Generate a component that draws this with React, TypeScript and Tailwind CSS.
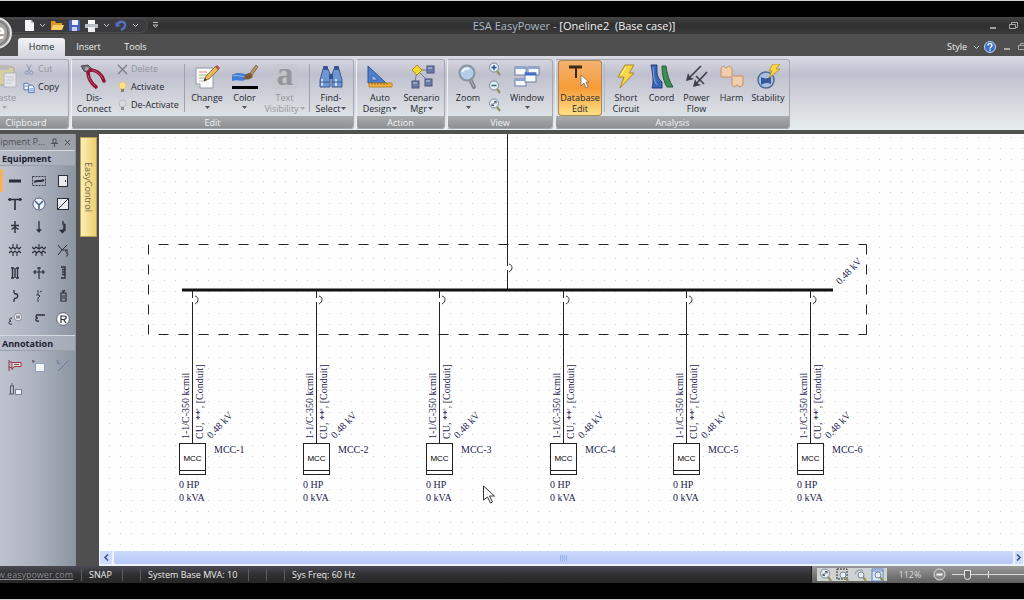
import { useState, type ReactNode } from "react"
import clsx from "clsx"

/* ---------- ribbon icons ---------- */

const PasteIcon = () => (
  <svg width="26" height="26" viewBox="0 0 26 26">
    <rect x="2" y="3" width="20" height="18" rx="2" fill="#d8cf9f" stroke="#a9a48e" />
    <rect x="7" y="1" width="10" height="5" rx="1" fill="#b9b9b9" />
    <path d="M12 9h12v14H12z" fill="#e3e5ea" stroke="#b3b6bd" />
    <path d="M14 13h8M14 16h8M14 19h6" stroke="#c3c6cd" />
  </svg>
)

const PliersIcon = () => (
  <svg width="28" height="26" viewBox="0 0 28 26">
    <path d="M1 2l7-1 4 4-3 4-5-2z" fill="#6f7276" stroke="#4a4c50" />
    <circle cx="7" cy="5" r="2" fill="#a9acb1" />
    <path d="M8 8c0 6 3 11 8 15" fill="none" stroke="#8e1633" strokeWidth="3.6" strokeLinecap="round" />
    <path d="M10 6c7 0 12 5 14 11" fill="none" stroke="#8e1633" strokeWidth="3.6" strokeLinecap="round" />
    <path d="M12 6c5 1 9 5 11 9M8 11c1 4 3 8 7 11" fill="none" stroke="#c0536c" />
  </svg>
)

const ChangeIcon = () => (
  <svg width="28" height="26" viewBox="0 0 28 26">
    <path d="M3 4h17v20H7l-4-4z" fill="#fbfbfc" stroke="#9298a3" />
    <path d="M3 20h4v4" fill="#d7dae0" stroke="#9298a3" />
    <path d="M6 8h8" stroke="#e08a7a" />
    <path d="M6 11h10M6 14h7" stroke="#8bb86a" />
    <path d="M6 17h6" stroke="#bcc1c9" />
    <path d="M11 17l2-5L23 2l3 3-10 10z" fill="#e6b85c" stroke="#7d5a22" strokeWidth="0.8" />
    <path d="M22 3l2-2 3 3-2 2z" fill="#b5544a" />
    <path d="M11 17l1-3 2 2z" fill="#333" />
  </svg>
)

const ColorIcon = () => (
  <svg width="28" height="26" viewBox="0 0 28 26">
    <path d="M1 11c5-3 10-2 16 0l-3 5c-4 2-8-1-13 1z" fill="#3f7fd6" />
    <path d="M2 12c4-1 8 0 12 1" stroke="#8fb8ee" fill="none" />
    <path d="M13 15c0-4 3-6 6-6l3 3c-1 3-5 4-9 3z" fill="#7b5a34" />
    <path d="M19 9l6-8 2 2-6 8z" fill="#b99766" stroke="#6d5232" strokeWidth="0.7" />
    <rect x="1" y="22" width="26" height="3" fill="#000" />
  </svg>
)

const TextIcon = () => (
  <svg width="26" height="26" viewBox="0 0 26 26" className="overflow-visible">
    <rect x="1" y="0" width="24" height="25" fill="#c3c5cb" opacity="0.6" />
    <text x="13" y="21" textAnchor="middle" fontSize="34" fontWeight="700" fontFamily="Liberation Serif, serif" fill="#94969b">
      a
    </text>
  </svg>
)

const BinocularsIcon = () => (
  <svg width="26" height="26" viewBox="0 0 26 26">
    <path d="M5 5h5l2 5v13H2v-7z" fill="#6f95d0" stroke="#3c5b92" />
    <path d="M21 5h-5l-2 5v13h10v-7z" fill="#6f95d0" stroke="#3c5b92" />
    <path d="M11 10h4v5h-4z" fill="#34558f" />
    <rect x="5" y="2" width="5" height="4" rx="1" fill="#34558f" />
    <rect x="16" y="2" width="5" height="4" rx="1" fill="#34558f" />
    <path d="M4 15v7M18 15v7" stroke="#c9dcf7" strokeWidth="2" />
    <path d="M2 18h10M14 18h10" stroke="#34558f" />
  </svg>
)

const DesignIcon = () => (
  <svg width="28" height="26" viewBox="0 0 28 26">
    <path d="M2 2v17h18z" fill="#4c7fd0" stroke="#2c559c" />
    <path d="M6 11v5h6z" fill="#a9c2ec" stroke="#2c559c" strokeWidth="0.7" />
    <path d="M3 19h23v4H3z" fill="#f0b33c" stroke="#b27716" strokeWidth="0.8" />
    <path d="M6 19v2M9 19v2M12 19v2M15 19v2M18 19v2M21 19v2" stroke="#8a5b10" strokeWidth="0.8" />
  </svg>
)

const ScenarioIcon = () => (
  <svg width="28" height="26" viewBox="0 0 28 26">
    <path d="M10 6h9M9 7L7 18M11 8l9 9" stroke="#777" fill="none" />
    <path d="M9 1l5 5-5 5-5-5z" fill="#f5d832" stroke="#a88f14" />
    <rect x="19" y="2" width="7" height="7" fill="#6b7aa6" stroke="#4a5680" />
    <rect x="4" y="17" width="7" height="7" fill="#6b7aa6" stroke="#4a5680" />
    <rect x="17" y="15" width="7" height="7" fill="#6b7aa6" stroke="#4a5680" />
    <path d="M20 4h4M5 19h4M18 17h4" stroke="#c5cee8" />
  </svg>
)

const ZoomIcon = () => (
  <svg width="24" height="26" viewBox="0 0 24 26">
    <path d="M14 15l4 8" stroke="#7d828c" strokeWidth="4" strokeLinecap="round" />
    <path d="M14 15l4 8" stroke="#b5bac4" strokeWidth="1" />
    <circle cx="11" cy="9" r="7.5" fill="#b4cdea" stroke="#8b93a1" strokeWidth="2" />
    <path d="M6 8c1-3 4-4 7-3" stroke="#eef5fd" strokeWidth="2" fill="none" />
  </svg>
)

const WindowIcon = () => (
  <svg width="28" height="26" viewBox="0 0 28 26">
    <g fill="#f7f9fd" stroke="#6b7fa8">
      <rect x="2" y="3" width="11" height="8" />
      <rect x="15" y="3" width="11" height="8" />
      <rect x="2" y="15" width="11" height="7" />
      <rect x="12" y="9" width="11" height="9" />
    </g>
    <path d="M2 4h11M15 4h11M2 16h10" stroke="#8ea6d2" strokeWidth="2" />
    <path d="M12 10h11" stroke="#3e6fc4" strokeWidth="3" />
  </svg>
)

const DatabaseEditIcon = () => (
  <svg width="28" height="26" viewBox="0 0 28 26">
    <path d="M3 3h13" stroke="#3a2a10" strokeWidth="3" />
    <path d="M10 4v10" stroke="#3a2a10" strokeWidth="2" />
    <path d="M15 11v11l3-3 2 5 2-1-2-5h3z" fill="#fff" stroke="#7a6a55" strokeWidth="0.8" />
  </svg>
)

const BoltIcon = () => (
  <svg width="26" height="26" viewBox="0 0 26 26">
    <path d="M12 1h9l-5 8h5L7 24l4-11H5z" fill="#f9d648" stroke="#a98a22" />
    <path d="M13 3l-5 8" stroke="#fff3b8" />
  </svg>
)

const CoordIcon = () => (
  <svg width="28" height="26" viewBox="0 0 28 26">
    <path d="M3 1h6c0 7-1 12 5 17v6H4c2-6 1-13-1-23z" fill="#3a66b8" stroke="#223f7c" />
    <path d="M5 3c1 7 0 13 4 18" stroke="#88a8e0" fill="none" />
    <path d="M14 2h4c1 8 3 15 7 21h-6c-3-5-5-12-5-21z" fill="#3f8d55" stroke="#235c34" />
  </svg>
)

const PowerFlowIcon = () => (
  <svg width="28" height="26" viewBox="0 0 28 26">
    <g fill="none" stroke="#3c3f46" strokeWidth="1.6">
      <path d="M18 2L5 15" />
      <path d="M24 8L12 21" />
      <path d="M13 12l8 8" />
    </g>
    <path d="M3 17l2-8 2 4 4 2zM10 23l2-8 2 4 4 2z" fill="#3c3f46" />
  </svg>
)

const HarmIcon = () => (
  <svg width="28" height="26" viewBox="0 0 28 26">
    <path d="M3 13V4l2-2 3 2 3-2 3 2v8h11v9l-3 2-3-2-3 2-2-2v-8z" fill="#f1cdae" stroke="#c98f66" />
  </svg>
)

const StabilityIcon = () => (
  <svg width="28" height="26" viewBox="0 0 28 26">
    <circle cx="12" cy="16" r="8" fill="#a9bfe2" stroke="#51688f" strokeWidth="1.5" />
    <path d="M7 13c3 2 7 2 10-1v8c-3-2-7-1-10 1z" fill="#34589c" />
    <path d="M19 0h7l-4 5h4L15 14l3-7h-3z" fill="#f9d648" stroke="#a98a22" strokeWidth="0.8" />
  </svg>
)

/* ---------- small icons ---------- */

const CutIcon = () => (
  <svg width="13" height="13" viewBox="0 0 13 13" fill="none" stroke="#8492b8">
    <path d="M4 1l4 8M9 1L5 9" />
    <circle cx="4" cy="10" r="1.8" />
    <circle cx="9" cy="10" r="1.8" />
  </svg>
)

const CopyIcon = () => (
  <svg width="13" height="13" viewBox="0 0 13 13" fill="#f4f7fc" stroke="#4d6fae">
    <path d="M1 2h4l2 2v5H1z" />
    <path d="M6 4h4l2 2v6H6z" />
    <path d="M7 8h4M7 10h4M2 5h3" stroke="#4f86cf" />
  </svg>
)

const DeleteIcon = () => (
  <svg width="11" height="11" viewBox="0 0 11 11" stroke="#7d7f88" strokeWidth="1.4">
    <path d="M1 1l9 9M10 1l-9 9" />
  </svg>
)

const BulbIcon = ({ on }: { on: boolean }) => (
  <svg width="11" height="13" viewBox="0 0 11 13">
    <circle cx="5.5" cy="4.5" r="3.5" fill={on ? "#fbe38b" : "#d8dade"} stroke={on ? "#e2c565" : "#b2b5bb"} strokeWidth="0.8" />
    <path d="M4 8h3v3H4z" fill={on ? "#8b8462" : "#8d9096"} />
  </svg>
)

const MagnifierIcon = ({ kind }: { kind: "in" | "out" | "fit" | "area" | "prev" | "page" }) => {
  const large = kind === "in" || kind === "out" || kind === "fit"
  return (
    <svg width="14" height="14" viewBox="0 0 14 14" fill="none">
      {kind === "area" && <rect x="1" y="1" width="10" height="10" stroke="#222" strokeDasharray="2 1" />}
      {kind === "page" && <path d="M1 1h11v12H1zM1 3h11" fill="#dbe7f8" stroke="#5d82bf" />}
      {kind === "prev" && <path d="M1 6c1-4 5-5 8-3" stroke="#9ab" strokeWidth="1.4" />}
      <path d="M9 9l3 4" stroke="#94905a" strokeWidth="2.2" />
      <circle
        cx={large ? 6 : 7}
        cy={large ? 5.5 : 7}
        r={large ? 4.5 : 3}
        fill="#e4eef8"
        stroke="#7a8797"
      />
      {kind === "in" && <path d="M3.5 5.5h5M6 3v5" stroke="#274b8a" strokeWidth="1.4" />}
      {kind === "out" && <path d="M3.5 5.5h5" stroke="#2b6b78" strokeWidth="1.4" />}
      {kind === "fit" && <path d="M4 7.5l4-4M4 5.5v2h2M6 3.5h2v2" stroke="#555" />}
    </svg>
  )
}

const Chevron = () => (
  <svg width="7" height="5" viewBox="0 0 7 5" fill="none" stroke="#c8c8c8">
    <path d="M1 1l2.5 2.5L6 1" />
  </svg>
)

const Minimise = () => (
  <svg width="8" height="8" viewBox="0 0 8 8" stroke="#c4c4c4" strokeWidth="1.5">
    <path d="M1 6h6" />
  </svg>
)

const Restore = () => (
  <svg width="9" height="8" viewBox="0 0 9 8" fill="none" stroke="#a9a9a9">
    <path d="M2.5 2.5v-2h6v5h-2M0.5 2.5h6v4h-6z" />
  </svg>
)

/* ---------- ribbon building blocks ---------- */

interface BigButtonProps {
  icon: ReactNode
  lines: string[]
  width: string
  menu?: boolean
  disabled?: boolean
  active?: boolean
}

function BigButton({ icon, lines, width, menu, disabled, active }: BigButtonProps) {
  return (
    <button
      type="button"
      disabled={disabled}
      className={clsx(
        "flex flex-col items-center h-14 pt-1 leading-[11px] whitespace-nowrap",
        width,
        disabled ? "text-[#92959b]" : "text-[#22262c]",
        active &&
          "rounded-sm ring-1 ring-inset ring-[#a58a55] bg-linear-to-b from-[#f3b371] via-[#f79b35] to-[#fde388]"
      )}
    >
      <span className="h-7 flex items-start justify-center">{icon}</span>
      {lines.map((line, i) => (
        <span key={line} className="flex items-center gap-px">
          {line}
          {menu && lines.length > 1 && i === lines.length - 1 && <Caret />}
        </span>
      ))}
      {menu && lines.length === 1 && (
        <span className="h-[9px] flex items-center">
          <Caret />
        </span>
      )}
    </button>
  )
}

const Caret = () => (
  <svg width="5" height="3" viewBox="0 0 5 3">
    <path d="M0 0h5L2.5 3z" fill="currentColor" opacity="0.75" />
  </svg>
)

function SmallButton({ icon, label, disabled }: { icon: ReactNode; label: string; disabled?: boolean }) {
  return (
    <button
      type="button"
      disabled={disabled}
      className={clsx(
        "flex items-center gap-[3px] h-[18px] whitespace-nowrap",
        disabled ? "text-[#92959b]" : "text-[#22262c]"
      )}
    >
      <span className="w-3 flex justify-center">{icon}</span>
      {label}
    </button>
  )
}

function Group({ title, children, className }: { title: string; children: ReactNode; className?: string }) {
  return (
    <section
      className={clsx(
        "flex flex-col shrink-0 rounded-[3px] border border-[#a5a8b0] border-l-[#eef0f4] overflow-hidden",
        className
      )}
    >
      <div className="flex h-14 px-[2px]">{children}</div>
      <h2 className="h-[13px] text-center leading-[13px] text-[#f4f4f4] bg-linear-to-b from-[#a9abad] to-[#8b8d8f]">
        {title}
      </h2>
    </section>
  )
}

const Divider = () => <div className="w-px h-12 mt-1 mx-px bg-[#9fa2ab]" />

/* ---------- equipment palette ---------- */

const paletteTools: { name: string; art: ReactNode }[] = [
  { name: "Bus", art: <path d="M1 7h12" strokeWidth="3" /> },
  {
    name: "Bus duct",
    art: (
      <>
        <rect x="0.5" y="2.5" width="13" height="9" strokeDasharray="2 1" strokeWidth="0.9" />
        <path d="M2 8l3-1h4l3-1" strokeWidth="2" />
      </>
    ),
  },
  {
    name: "Panel",
    art: (
      <>
        <rect x="2.5" y="1.5" width="9" height="11" fill="#e9ebef" />
        <path d="M9.5 6v2" />
      </>
    ),
  },
  { name: "Utility tee", art: <path d="M0 2.5h14M7 3v10M2 1v3M12 1v3" strokeWidth="1.6" /> },
  {
    name: "Generator",
    art: (
      <>
        <circle cx="7" cy="7" r="6" fill="#eef2f8" stroke="#56617a" />
        <path d="M7 12V8L3 4M7 8l4-4" stroke="#3f5c93" strokeWidth="1.5" />
      </>
    ),
  },
  {
    name: "Inverter",
    art: (
      <>
        <rect x="1.5" y="1.5" width="11" height="11" fill="#e9ebef" />
        <path d="M2 12L12 2" />
      </>
    ),
  },
  { name: "Fuse switch", art: <path d="M7 1v12M3 5.5h8M3.5 9.5L7 7l3.5 2.5" strokeWidth="1.4" /> },
  { name: "Cable", art: <path d="M7 1v9M5.5 10l1.5 2 1.5-2z" strokeWidth="1.3" /> },
  { name: "Reactor", art: <path d="M7 1v3c3 0 3 2 0 2 3 0 3 2 0 2 3 0 3 2 0 2v1M4.5 10.5l2 2 2-2z" strokeWidth="1.3" /> },
  { name: "Transformer", art: <path d="M1 4l2 2 2-2 2 2 2-2 2 2 2-2M1 10l2-2 2 2 2-2 2 2 2-2 2 2M5 1v4M9 1v4M5 9v4M9 9v4" strokeWidth="1.1" /> },
  { name: "Three winding transformer", art: <path d="M0 4l2 2 2-2 3 2 3-2 2 2 2-2M0 10l3-2 2 2 2-2 2 2 2-2 3 2M7 1v5M4 9v4M10 9v4" strokeWidth="1.1" /> },
  { name: "Zigzag transformer", art: <path d="M2 2l4 5 5-5M6 7l-4 5M6 7h6M9 8c3-1 3 2 1 2 3 0 2 3 0 3" /> },
  { name: "Capacitor", art: <path d="M4.5 2v10M7 2v10M9.5 2v10M3 2h3M3 12h3M8 12h3M8 2h3" strokeWidth="1.4" /> },
  { name: "Filter", art: <path d="M7 1v12M1 6h12M3 4v4M11 4v4M5 2h4" strokeWidth="1.2" /> },
  { name: "Coil", art: <path d="M5 1h4v2.500H6h3V6H6h3v2.500H6h3V12H5" strokeWidth="1.3" /> },
  { name: "Breaker", art: <path d="M6 1v3M6 4.5c5 0 5 5 0 5M6 10v3" strokeWidth="1.3" /> },
  { name: "Switch", art: <path d="M6 1v4l2 2-2 2v4M8 3l2-1M4 6h3" strokeWidth="0.9" /> },
  { name: "Fuse", art: <path d="M5 4h5v8H5zM7 1v3M9 1L7 4M6 7h3M6 9h3" strokeWidth="1.2" /> },
  {
    name: "Meter",
    art: (
      <>
        <path d="M4 6c-3 0-3 3-1 3-3 0-3 4 1 3" />
        <circle cx="10" cy="5" r="3.8" fill="#e9ebef" strokeWidth="0.4" />
        <path d="M9 3.5v3M11 3.5v3" />
      </>
    ),
  },
  { name: "Current transformer", art: <path d="M4 3h9M8 3c-5-1-5 3-2 3-3 0-3 4 1 3" strokeWidth="1.3" /> },
  {
    name: "Relay",
    art: (
      <>
        <circle cx="7" cy="7" r="6.3" fill="#f6f8fa" strokeWidth="0.6" />
        <path d="M5 11V4h3c3 0 3 3 0 3.5H5M7.5 7.5L10 11" strokeWidth="1.2" />
      </>
    ),
  },
]

const annotationTools: { name: string; art: ReactNode }[] = [
  {
    name: "Text label",
    art: (
      <>
        <path d="M1 1v11M1 3h3M1 8l3 1" stroke="#8a3a44" />
        <path d="M4 3.5h9v4H6l-2 3z" fill="#f0dfe0" stroke="#a1323f" />
        <path d="M6 5.5h5" stroke="#555" />
      </>
    ),
  },
  {
    name: "Rectangle",
    art: (
      <>
        <rect x="3.5" y="4.5" width="9" height="8" fill="#f1f5fa" stroke="#8fa1ba" />
        <path d="M0 1l3 1-2 2z" fill="#445" stroke="none" />
      </>
    ),
  },
  { name: "Line", art: <path d="M2 12L13 1M1 1l2 4M1 4h3" stroke="#6b789a" /> },
  {
    name: "Picture",
    art: (
      <>
        <path d="M2.5 4v8M5.5 4v8M2 4h4M4 1v3M1 12h5" stroke="#555a66" />
        <rect x="7.5" y="7.5" width="6" height="5" fill="#eef1f6" stroke="#7b8496" />
      </>
    ),
  },
]

function ToolGrid({ tools }: { tools: typeof paletteTools }) {
  return (
    <div className="grid grid-cols-3 w-[72px]">
      {tools.map((tool) => (
        <button key={tool.name} type="button" aria-label={tool.name} className="flex items-center justify-center h-[23px]">
          <svg width="14" height="14" viewBox="0 0 14 14" fill="none" stroke="#2b2e36">
            {tool.art}
          </svg>
        </button>
      ))}
    </div>
  )
}

const PaletteHeading = ({ children }: { children: ReactNode }) => (
  <h2 className="h-4 pl-[2px] leading-[15px] font-bold text-[#1b2030] border-y border-t-[#d5dae0] border-b-[#99a0aa] bg-linear-to-r from-[#b9bfca] to-[#a3abb6]">
    {children}
  </h2>
)

function Palette() {
  return (
    <aside className="w-[76px] shrink-0 overflow-hidden border-r border-[#8d939c] bg-linear-to-r from-[#bfc3ce] via-[#abb1be] to-[#8c95a2]">
      <div className="flex items-center justify-end h-4 pr-1 gap-[6px] text-[#4c5058] bg-[#9b9fa6] whitespace-nowrap">
        <span>Equipment P...</span>
        <button type="button" aria-label="Pin">
          <svg width="7" height="9" viewBox="0 0 7 9" fill="none" stroke="#4c5058">
            <path d="M2 1h3v4H2zM0 5.5h7M3.5 5v4" />
          </svg>
        </button>
        <button type="button" aria-label="Close">
          <svg width="7" height="7" viewBox="0 0 7 7" stroke="#4c5058">
            <path d="M1 1l5 5M6 1L1 6" />
          </svg>
        </button>
      </div>
      <PaletteHeading>Equipment</PaletteHeading>
      <div className="flex pt-[3px] pb-[5px]">
        <button type="button" aria-label="Select" className="w-[3px] h-[23px] bg-[#f5b060]" />
        <ToolGrid tools={paletteTools} />
      </div>
      <PaletteHeading>Annotation</PaletteHeading>
      <div className="pl-[3px] pt-[3px]">
        <ToolGrid tools={annotationTools} />
      </div>
    </aside>
  )
}

/* ---------- one-line diagram ---------- */

const feeders = [
  { name: "MCC-1", x: 94 },
  { name: "MCC-2", x: 218 },
  { name: "MCC-3", x: 341 },
  { name: "MCC-4", x: 465 },
  { name: "MCC-5", x: 588 },
  { name: "MCC-6", x: 712 },
]

function Breaker({ x, y }: { x: number; y: number }) {
  return (
    <>
      <rect x={x - 1} y={y - 2} width="3" height="4" fill="#fff" />
      <path d={`M${x + 2} ${y - 4}c4 1 4 6 0 8`} fill="none" stroke="#333" />
    </>
  )
}

function Feeder({ name, x }: { name: string; x: number }) {
  return (
    <g>
      <path d={`M${x - 0.5} 156v153`} stroke="#222" />
      <Breaker x={x} y={166} />
      <text transform={`translate(${x - 4} 305) rotate(-90)`}>1-1/C-350 kcmil</text>
      <text transform={`translate(${x + 10} 305) rotate(-90)`}>CU, **', [Conduit]</text>
      <text transform={`translate(${x + 18} 305) rotate(-46)`}>0.48 kV</text>
      <rect x={x - 13.5} y="309.5" width="26" height="31" fill="#fff" stroke="#222" />
      <path d={`M${x - 13} 336.5h25`} stroke="#222" />
      <text x={x - 0.5} y="327" textAnchor="middle" className="font-['Liberation_Sans',sans-serif] text-[8px] fill-black">
        MCC
      </text>
      <text x={x + 21} y="319">{name}</text>
      <text x={x - 14} y="354">0 HP</text>
      <text x={x - 14} y="367">0 kVA</text>
    </g>
  )
}

function Oneline() {
  return (
    <svg
      className="block w-full flex-1 min-h-0 bg-[#fefefe] font-['Liberation_Serif',serif] text-[10px] fill-[#23234f]"
      role="img"
      aria-label="Oneline2"
    >
      <defs>
        <pattern id="snap" x="8" y="1" width="11" height="11" patternUnits="userSpaceOnUse">
          <rect x="2" y="2" width="1" height="1" fill="#d3d3d3" />
        </pattern>
      </defs>
      <rect width="100%" height="100%" fill="url(#snap)" />
      <g fill="none" stroke="#222">
        <path d="M49.5 110.5h718M49.5 200.5h718" strokeDasharray="10 10" strokeDashoffset="-10" />
        <path d="M49.5 110.5v90M767.5 110.5v90" strokeDasharray="10 10" />
      </g>
      <path d="M408.5 0v156" stroke="#222" />
      <Breaker x={408} y={134} />
      <path d="M83 156h651" stroke="#111" strokeWidth="3" />
      <text transform="translate(741 151) rotate(-46)">0.48 kV</text>
      {feeders.map((f) => (
        <Feeder key={f.name} {...f} />
      ))}
      <path d="M384.5 352v14l4-3 3 6 2-1-3-6h5z" fill="#fff" stroke="#333" />
    </svg>
  )
}

function ScrollBar() {
  return (
    <div className="flex h-[15px] shrink-0 gap-[2px] px-px pb-[2px] bg-[#eef2fb]">
      <button type="button" aria-label="Scroll left" className="w-3 flex items-center justify-center bg-[#cfdcfb]">
        <svg width="6" height="7" viewBox="0 0 6 7" fill="none" stroke="#3d5590" strokeWidth="1.6">
          <path d="M5 0.5L2 3.5l3 3" />
        </svg>
      </button>
      <div className="flex-1 flex items-center justify-center rounded-xs bg-linear-to-b from-[#cbd9fd] to-[#b7c8f5]">
        <svg width="7" height="6" viewBox="0 0 7 6" stroke="#98b0e8">
          <path d="M0.5 0v6M2.5 0v6M4.5 0v6M6.5 0v6" />
        </svg>
      </div>
      <button type="button" aria-label="Scroll right" className="w-2 flex items-center justify-center bg-[#cfdcfb]">
        <svg width="6" height="7" viewBox="0 0 6 7" fill="none" stroke="#3d5590" strokeWidth="1.6">
          <path d="M1 0.5l3 3-3 3" />
        </svg>
      </button>
    </div>
  )
}

/* ---------- window chrome ---------- */

function QuickAccess() {
  return (
    <div className="flex items-center h-[15px] pl-[25px] pr-2 gap-[5px] rounded-r-full border border-l-0 border-[#4d4d4d] bg-[#3c3c3e]">
      <button type="button" aria-label="New">
        <svg width="9" height="11" viewBox="0 0 9 11">
          <path d="M0 0h6l3 3v8H0z" fill="#f5f6f8" />
          <path d="M6 0v3h3z" fill="#b6bac2" />
        </svg>
      </button>
      <Chevron />
      <button type="button" aria-label="Open">
        <svg width="13" height="11" viewBox="0 0 13 11">
          <path d="M0 1h4l1 2h6v7H0z" fill="#d99a28" />
          <path d="M2 5h11l-2 5H0z" fill="#f8cf62" />
        </svg>
      </button>
      <button type="button" aria-label="Save">
        <svg width="11" height="11" viewBox="0 0 11 11">
          <rect width="11" height="11" rx="1" fill="#4866c4" />
          <rect x="3" width="6" height="5" fill="#eef1fa" />
          <rect x="3" y="7" width="5" height="4" fill="#c9d2ec" />
        </svg>
      </button>
      <button type="button" aria-label="Print">
        <svg width="13" height="12" viewBox="0 0 13 12">
          <path d="M3 0h7v4H3z" fill="#fff" />
          <path d="M0 4h13v4H0z" fill="#b9bdc4" />
          <path d="M3 7h7v5H3z" fill="#eceef1" />
        </svg>
      </button>
      <Chevron />
      <button type="button" aria-label="Undo">
        <svg width="12" height="11" viewBox="0 0 12 11" fill="none" stroke="#5570bd" strokeWidth="2.4">
          <path d="M2 5c2-5 9-4 8 1 0 2-2 3-4 4" />
          <path d="M0 2l1 5 5-1z" fill="#5570bd" stroke="none" />
        </svg>
      </button>
      <Chevron />
    </div>
  )
}

function TitleBar() {
  return (
    <header className="flex items-center h-[17px] pr-[6px] bg-linear-to-b from-[#454545] via-[#2f2f2f] to-[#3b3b3b]">
      <QuickAccess />
      <span className="pl-1">
        <svg width="7" height="7" viewBox="0 0 7 7" fill="none" stroke="#bdbdbd">
          <path d="M1 0.5h5M1 3l2.5 2.5L6 3z" />
        </svg>
      </span>
      <h1 className="flex-1 text-center text-[11px] leading-[16px] text-[#f2f2f2] whitespace-pre">
        <span className="text-[#a9bac8]">ESA EasyPower - </span>
        {"[Oneline2  (Base case)]"}
      </h1>
      <div className="flex items-center gap-3">
        <button type="button" aria-label="Minimize window"><Minimise /></button>
        <button type="button" aria-label="Restore window"><Restore /></button>
      </div>
    </header>
  )
}

const tabs = ["Home", "Insert", "Tools"]

function TabRow() {
  const [tab, setTab] = useState("Home")
  return (
    <nav className="flex items-end h-[22px] pl-[18px] bg-[#4f4f4f] text-[#f0f0f0]">
      {tabs.map((t) => (
        <button
          key={t}
          type="button"
          onClick={() => setTab(t)}
          className={clsx(
            "w-[47px] h-[18px] leading-[18px] rounded-t-[3px]",
            t === tab && "text-[#1c1f24] bg-linear-to-b from-[#f1f2f6] to-[#d6d7e1]"
          )}
        >
          {t}
        </button>
      ))}
      <div className="flex items-center self-end h-[18px] ml-auto gap-[7px] shrink-0">
        <div className="flex items-center gap-1">
          <button type="button" className="flex items-center gap-[6px]">
            Style <Chevron />
          </button>
          <button type="button" aria-label="Help">
            <svg width="12" height="12" viewBox="0 0 12 12">
              <circle cx="6" cy="6" r="5.5" fill="#3a6fc4" stroke="#c3d4ee" />
              <path d="M4 4.5c0-2.5 4-2.5 4 0C8 6 6 6 6 7.5M6 8.5v1.2" fill="none" stroke="#fff" strokeWidth="1.4" />
            </svg>
          </button>
        </div>
        <button type="button" aria-label="Minimize document"><Minimise /></button>
        <button type="button" aria-label="Restore document" className="w-[6px] overflow-hidden">
          <Restore />
        </button>
      </div>
    </nav>
  )
}

function Ribbon() {
  return (
    <div className="flex gap-[2px] h-[74px] pt-[3px] pb-px overflow-hidden bg-linear-to-b from-[#dadae4] via-[#bfc0cd] via-25% to-[#e8eeee]">
      <Group title="Clipboard" className="-ml-[17px] w-[86px]">
        <BigButton icon={<PasteIcon />} lines={["Paste"]} width="w-[37px]" menu disabled />
        <div className="flex flex-col">
          <SmallButton icon={<CutIcon />} label="Cut" disabled />
          <SmallButton icon={<CopyIcon />} label="Copy" />
        </div>
      </Group>
      <Group title="Edit">
        <BigButton icon={<PliersIcon />} lines={["Dis-", "Connect"]} width="w-[40px]" />
        <div className="flex flex-col w-[69px] pl-[2px]">
          <SmallButton icon={<DeleteIcon />} label="Delete" disabled />
          <SmallButton icon={<BulbIcon on />} label="Activate" />
          <SmallButton icon={<BulbIcon on={false} />} label="De-Activate" />
        </div>
        <Divider />
        <BigButton icon={<ChangeIcon />} lines={["Change"]} width="w-[42px]" menu />
        <BigButton icon={<ColorIcon />} lines={["Color"]} width="w-[33px]" menu />
        <BigButton icon={<TextIcon />} lines={["Text", "Visibility"]} width="w-[47px]" menu disabled />
        <Divider />
        <BigButton icon={<BinocularsIcon />} lines={["Find-", "Select"]} width="w-[40px]" menu />
      </Group>
      <Group title="Action">
        <BigButton icon={<DesignIcon />} lines={["Auto", "Design"]} width="w-[42px]" menu />
        <BigButton icon={<ScenarioIcon />} lines={["Scenario", "Mgr"]} width="w-[41px]" menu />
      </Group>
      <Group title="View">
        <BigButton icon={<ZoomIcon />} lines={["Zoom"]} width="w-[36px]" menu />
        <div className="flex flex-col w-[18px]">
          <button type="button" aria-label="Zoom in" className="h-[18px] flex items-center justify-center">
            <MagnifierIcon kind="in" />
          </button>
          <button type="button" aria-label="Zoom out" className="h-[18px] flex items-center justify-center">
            <MagnifierIcon kind="out" />
          </button>
          <button type="button" aria-label="Zoom to fit" className="h-[18px] flex items-center justify-center">
            <MagnifierIcon kind="fit" />
          </button>
        </div>
        <BigButton icon={<WindowIcon />} lines={["Window"]} width="w-[46px]" menu />
      </Group>
      <Group title="Analysis">
        <BigButton icon={<DatabaseEditIcon />} lines={["Database", "Edit"]} width="w-[44px]" active />
        <div className="w-px h-12 mt-1 ml-[2px] mr-[3px] bg-[#b5b7bf]" />
        <BigButton icon={<BoltIcon />} lines={["Short", "Circuit"]} width="w-[36px]" />
        <BigButton icon={<CoordIcon />} lines={["Coord"]} width="w-[35px]" />
        <BigButton icon={<PowerFlowIcon />} lines={["Power", "Flow"]} width="w-[35px]" />
        <BigButton icon={<HarmIcon />} lines={["Harm"]} width="w-[35px]" />
        <BigButton icon={<StabilityIcon />} lines={["Stability"]} width="w-[38px]" />
      </Group>
    </div>
  )
}

const StatusRule = () => <div className="w-px h-3 bg-[#5c5c60]" />

function StatusBar() {
  const [zoom, setZoom] = useState(18)
  return (
    <footer className="flex items-center h-[17px] overflow-hidden text-[#ececec] whitespace-nowrap bg-linear-to-b from-[#4a4a54] via-[#303032] to-[#262626]">
      <div className="flex justify-end w-[81px] pr-2 overflow-hidden shrink-0">
        <a href="#" className="underline text-[#8b8e94]">www.easypower.com</a>
      </div>
      <StatusRule />
      <span className="w-10 pl-[7px]">SNAP</span>
      <StatusRule />
      <span className="w-[17px]" />
      <StatusRule />
      <span className="w-[107px] pl-[7px]">System Base MVA: 10</span>
      <StatusRule />
      <span className="w-[17px]" />
      <StatusRule />
      <span className="w-[17px]" />
      <StatusRule />
      <span className="pl-[7px]">Sys Freq: 60 Hz</span>

      <div className="flex items-center h-full ml-auto pl-[5px] w-[213px] shrink-0 overflow-hidden border-l border-[#1d1d1d] bg-linear-to-b from-[#9a9a9a] to-[#5e5e5e]">
        <div className="flex items-center justify-around w-[70px] h-[13px] shrink-0 bg-[#cfd2d2]">
          <button type="button" aria-label="Fit"><MagnifierIcon kind="fit" /></button>
          <button type="button" aria-label="Zoom area"><MagnifierIcon kind="area" /></button>
          <button type="button" aria-label="Previous zoom"><MagnifierIcon kind="prev" /></button>
          <button type="button" aria-label="Page zoom"><MagnifierIcon kind="page" /></button>
        </div>
        <span className="w-[46px] shrink-0 text-center text-[#d8d8d8]">112%</span>
        <button type="button" aria-label="Decrease zoom" className="shrink-0">
          <svg width="13" height="13" viewBox="0 0 13 13">
            <circle cx="6.5" cy="6.5" r="5.5" fill="#8b8b8b" stroke="#e6e6e6" />
            <path d="M3.5 6.5h6" stroke="#fff" strokeWidth="2" />
          </svg>
        </button>
        <div className="relative flex items-center flex-1 ml-[6px]">
          <div className="absolute left-1/2 w-px h-[7px] bg-[#e8e8e8]" />
          <input
            type="range"
            aria-label="Zoom level"
            min={0}
            max={100}
            value={zoom}
            onChange={(e) => setZoom(Number(e.target.value))}
            className="relative appearance-none w-full h-px bg-[#d6d6d6] [&::-webkit-slider-thumb]:appearance-none [&::-webkit-slider-thumb]:w-[7px] [&::-webkit-slider-thumb]:h-[10px] [&::-webkit-slider-thumb]:rounded-b-full [&::-webkit-slider-thumb]:border [&::-webkit-slider-thumb]:border-[#ededed] [&::-webkit-slider-thumb]:bg-[#6c6c6c]"
          />
        </div>
      </div>
    </footer>
  )
}

export default function App() {
  return (
    <div className="relative flex flex-col h-screen overflow-hidden bg-black border-y border-[#cfd6d2] py-4 font-['Open_Sans','Noto_Sans',sans-serif] text-[9px]">
      <TitleBar />
      <TabRow />
      {/* application button hangs over the title bar and the tabs */}
      <button type="button" aria-label="Application menu" className="absolute -left-[21px] top-[15px]">
        <svg width="34" height="34" viewBox="0 0 34 34">
          <circle cx="17" cy="17" r="15" fill="#8d8d8d" stroke="#e4e4e4" strokeWidth="2" />
          <circle cx="17" cy="17" r="12" fill="#a5a5a5" stroke="#6e6e6e" />
          <text x="13" y="23" fontSize="22" fontWeight="700" fill="#fff">e</text>
        </svg>
      </button>
      <Ribbon />
      <div className="h-1 shrink-0 bg-[#4f524f]" />
      <main className="flex flex-1 min-h-0 bg-[#4f4f4f]">
        <Palette />
        <div className="w-[23px] shrink-0 pt-[3px] pl-1">
          <button
            type="button"
            className="flex items-center justify-center w-[17px] h-[100px] [writing-mode:vertical-rl] text-[#6b6650] border border-[#b79f55] bg-linear-to-r from-[#fbeeb6] to-[#efd06c]"
          >
            EasyControl
          </button>
        </div>
        <div className="flex flex-col flex-1 min-w-0">
          <Oneline />
          <ScrollBar />
        </div>
      </main>
      <StatusBar />
    </div>
  )
}
